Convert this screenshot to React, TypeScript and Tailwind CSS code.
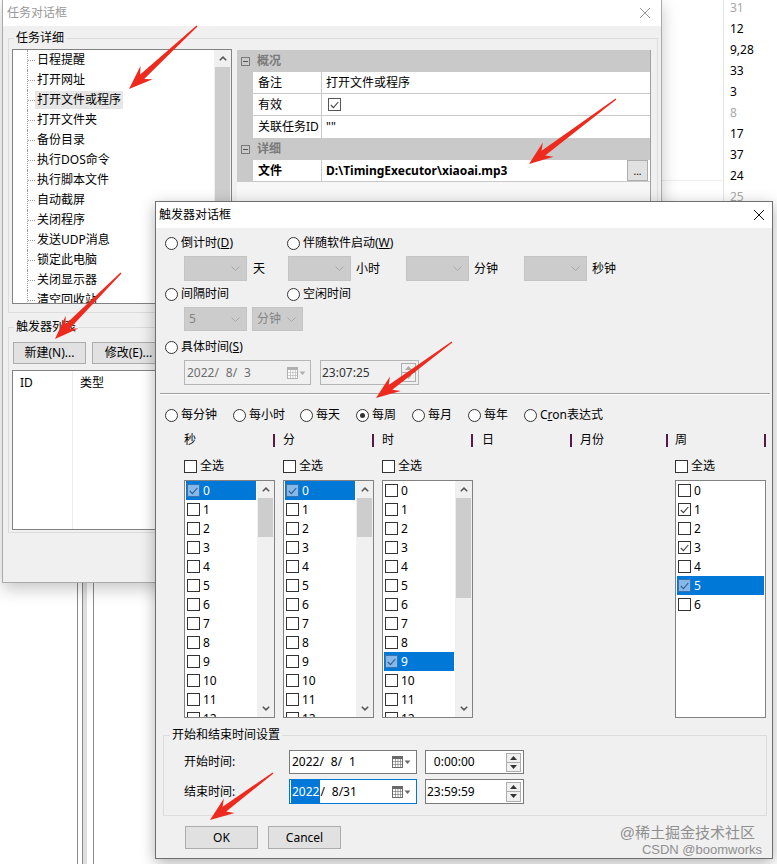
import React from "react"

const FONT = "font-['Noto_Sans','Noto_Sans_CJK_SC',sans-serif]"

// red annotation arrows: tail x,y -> tip x,y
const ARROWS: [number, number, number, number][] = [
    [197, 26, 129, 89],
    [616, 99, 529, 164],
    [121, 273, 55, 339],
    [452, 342, 376, 398],
    [273, 773, 210, 820],
]

function arrowPoints(x1: number, y1: number, x2: number, y2: number) {
    const dx = x2 - x1, dy = y2 - y1
    const len = Math.hypot(dx, dy)
    const ux = dx / len, uy = dy / len
    const nx = -uy, ny = ux
    const hl = 24, hw = 9, sw = 3, tw = 0.7
    const bx = x2 - ux * hl, by = y2 - uy * hl
    const nbx = x2 - ux * (hl - 6), nby = y2 - uy * (hl - 6)
    const pts = [
        [x1 + nx * tw, y1 + ny * tw],
        [nbx + nx * sw, nby + ny * sw],
        [bx + nx * hw, by + ny * hw],
        [x2, y2],
        [bx - nx * hw, by - ny * hw],
        [nbx - nx * sw, nby - ny * sw],
        [x1 - nx * tw, y1 - ny * tw],
    ]
    return pts.map(p => `${p[0].toFixed(1)},${p[1].toFixed(1)}`).join(" ")
}

function CloseX({ color, className = "" }: { color: string; className?: string }) {
    return (
        <svg className={className} width="10" height="10" viewBox="0 0 10 10">
            <path d="M0 0L10 10M10 0L0 10" stroke={color} strokeWidth="1" />
        </svg>
    )
}

function Radio({ label, checked = false, className = "" }: { label: React.ReactNode; checked?: boolean; className?: string }) {
    return (
        <div className={`flex items-center h-[14px] ${className}`}>
            <span className="w-[13px] h-[13px] rounded-full border border-[#333] bg-white flex items-center justify-center shrink-0">
                {checked && <span className="w-[5px] h-[5px] rounded-full bg-[#333]" />}
            </span>
            <span className="ml-[3px] whitespace-nowrap">{label}</span>
        </div>
    )
}

function Box({ checked = false, sel = false, className = "" }: { checked?: boolean; sel?: boolean; className?: string }) {
    return (
        <span className={`w-[13px] h-[13px] border flex items-center justify-center shrink-0 ${sel ? "bg-[#88b8e8] border-[#3a74b0]" : "bg-white border-[#333]"} ${className}`}>
            {checked && (
                <svg width="9" height="8" viewBox="0 0 9 8">
                    <path d="M0.8 4 L3.4 6.6 L8.3 1" fill="none" stroke={sel ? "#2a5f96" : "#444"} strokeWidth="1.1" />
                </svg>
            )}
        </span>
    )
}

function Chevron({ up = false, color = "#555" }: { up?: boolean; color?: string }) {
    return (
        <svg width="8" height="5" viewBox="0 0 8 5">
            <path d={up ? "M0.8 4.3 L4 1.1 L7.2 4.3" : "M0.8 0.7 L4 3.9 L7.2 0.7"} fill="none" stroke={color} strokeWidth="1.5" />
        </svg>
    )
}

function Combo({ value = "", className = "" }: { value?: string; className?: string }) {
    return (
        <div className={`h-full bg-[#cccccc] border border-[#c4c4c4] flex items-center pl-[4px] text-[#838383] shrink-0 ${className}`}>
            <span className="flex-1">{value}</span>
            <svg className="mr-[6px]" width="9" height="5" viewBox="0 0 9 5">
                <path d="M0.5 0.5 L4.5 4.5 L8.5 0.5" fill="none" stroke="#a8a8a8" />
            </svg>
        </div>
    )
}

function CalIcon({ color }: { color: string }) {
    return (
        <svg width="19" height="12" viewBox="0 0 19 12">
            <rect x="0.5" y="0.5" width="10" height="11" fill="#fff" stroke={color} />
            <rect x="0.5" y="0.5" width="10" height="2.5" fill={color} />
            <path d="M0.5 5.5H10.5M0.5 8.5H10.5M3.5 3V11.5M6 3V11.5M8.5 3V11.5" stroke={color} strokeWidth="0.6" />
            <path d="M12.5 4.5 H18.5 L15.5 8 Z" fill={color} />
        </svg>
    )
}

function Spin({ h, color }: { h: string; color: string }) {
    return (
        <div className={`flex flex-col w-[15px] ${h} ml-auto mr-[2px]`}>
            <div className="flex-1 border border-[#adadad] bg-[#f0f0f0] flex items-center justify-center">
                <svg width="7" height="4" viewBox="0 0 7 4"><path d="M0 4 L3.5 0 L7 4Z" fill={color} /></svg>
            </div>
            <div className="flex-1 border border-t-0 border-[#adadad] bg-[#f0f0f0] flex items-center justify-center">
                <svg width="7" height="4" viewBox="0 0 7 4"><path d="M0 0 L3.5 4 L7 0Z" fill={color} /></svg>
            </div>
        </div>
    )
}

function ListBox({ count, checked = [], sel = -1, thumb }: { count: number; checked?: number[]; sel?: number; thumb?: string }) {
    return (
        <div className="w-[91px] h-[238px] border border-[#828282] bg-white flex overflow-hidden">
            <div className="flex-1 flex flex-col overflow-hidden">
                {Array.from({ length: count }, (_, i) => (
                    <div key={i} className={`h-[19px] shrink-0 flex items-center mx-[1px] ${i === sel ? "bg-[#0078d7] text-white" : ""}`}>
                        <Box className="ml-[1px]" checked={checked.includes(i)} sel={i === sel} />
                        <span className="ml-[3px]">{i}</span>
                    </div>
                ))}
            </div>
            {thumb && (
                <div className="w-[17px] bg-[#f0f0f0] flex flex-col items-center shrink-0">
                    <div className="h-[17px] flex items-center justify-center"><Chevron up /></div>
                    <div className={`w-[15px] bg-[#cdcdcd] ${thumb}`} />
                    <div className="flex-1" />
                    <div className="h-[17px] flex items-center justify-center"><Chevron /></div>
                </div>
            )}
        </div>
    )
}

function Col({ title, w, children }: { title: string; w: string; children?: React.ReactNode }) {
    return (
        <div className={`${w} flex flex-col shrink-0`}>
            <div className="h-[14px] flex items-center justify-between">
                <span>{title}</span>
                <span className="w-[2px] h-[13px] bg-[#5a1845]" />
            </div>
            {children && (
                <>
                    <div className="mt-[12px] h-[14px] flex items-center">
                        <Box />
                        <span className="ml-[3px]">全选</span>
                    </div>
                    <div className="mt-[7px]">{children}</div>
                </>
            )}
        </div>
    )
}

const TREE = ["日程提醒", "打开网址", "打开文件或程序", "打开文件夹", "备份目录", "执行DOS命令", "执行脚本文件", "自动截屏", "关闭程序", "发送UDP消息", "锁定此电脑", "关闭显示器", "清空回收站"]

function Cat({ label }: { label: string }) {
    return (
        <div className="h-[22px] bg-[#c9c9c9] flex items-center shrink-0">
            <span className="ml-[4px] w-[9px] h-[9px] border border-[#7a7a7a] flex items-center justify-center">
                <span className="w-[5px] h-px bg-[#555]" />
            </span>
            <span className="ml-[7px] font-bold text-[#7a7a7a]">{label}</span>
        </div>
    )
}

function Prop({ name, children, bold = false, last = false }: { name: string; children: React.ReactNode; bold?: boolean; last?: boolean }) {
    return (
        <div className={`h-[22px] flex shrink-0 ${last ? "" : "border-b border-[#c9c9c9]"} ${bold ? "font-bold" : ""}`}>
            <div className="w-[16px] bg-[#c9c9c9]" />
            <div className="w-[69px] bg-white pl-[5px] flex items-center border-r border-[#c9c9c9] whitespace-nowrap">{name}</div>
            <div className="flex-1 bg-white pl-[4px] flex items-center">{children}</div>
        </div>
    )
}

function TaskWindow() {
    return (
        <div className="absolute left-[2px] top-[-1px] w-[660px] h-[584px] border border-[#aaaaaa] bg-[#f0f0f0] shadow-[0_6px_16px_rgba(0,0,0,0.22)] flex flex-col">
            <div className="h-[26px] bg-white flex items-center pl-[4px] text-[#999] shrink-0">
                <span className="flex-1">任务对话框</span>
                <CloseX color="#999" className="mr-[11px]" />
            </div>
            <div className="flex-1 flex flex-col pl-[5px] pt-[5px]">
                <fieldset className="w-[650px] h-[282px] border border-[#dcdcdc]">
                    <legend className="ml-[5px] px-[2px] leading-[14px]">任务详细</legend>
                    <div className="flex items-start">
                        <div className="mt-[4px] ml-[3px] w-[220px] h-[255px] border border-[#828282] bg-white flex">
                            <div className="flex-1 flex flex-col overflow-hidden">
                                {TREE.map((t, i) => (
                                    <div key={t} className="h-[20px] shrink-0 flex items-stretch pl-[14px]">
                                        <span className="border-l border-dotted border-[#9a9a9a]" />
                                        <span className="w-[7px] self-center border-t border-dotted border-[#9a9a9a]" />
                                        <span className={`self-center px-[2px] leading-[18px] whitespace-nowrap ${i === 2 ? "bg-[#e6e6e6]" : ""}`}>{t}</span>
                                    </div>
                                ))}
                            </div>
                            <div className="w-[17px] bg-[#f0f0f0] flex flex-col items-center shrink-0">
                                <div className="h-[17px] flex items-center justify-center"><Chevron up /></div>
                                <div className="w-[15px] h-[225px] bg-[#cdcdcd]" />
                            </div>
                        </div>
                        <div className="mt-[5px] ml-[5px] w-[414px] h-[250px] bg-[#f7f7f7] border-r border-[#a0a0a0] flex flex-col">
                            <Cat label="概况" />
                            <Prop name="备注">打开文件或程序</Prop>
                            <Prop name="有效"><Box checked className="ml-[2px] border-[#555]" /></Prop>
                            <Prop name="关联任务ID" last>""</Prop>
                            <Cat label="详细" />
                            <Prop name="文件" bold>
                                <span className="flex-1">D:\TimingExecutor\xiaoai.mp3</span>
                                <span className="w-[21px] h-[21px] mr-[2px] bg-[#e1e1e1] border border-[#adadad] flex items-center justify-center font-normal text-[10px]">...</span>
                            </Prop>
                        </div>
                    </div>
                </fieldset>
                <fieldset className="mt-[7px] w-[650px] h-[213px] border border-[#dcdcdc]">
                    <legend className="ml-[5px] px-[2px] leading-[14px]">触发器列表</legend>
                    <div className="mt-[8px] ml-[4px] flex">
                        <button className="w-[73px] h-[22px] bg-[#e1e1e1] border border-[#adadad]">新建(N)...</button>
                        <button className="ml-[6px] w-[73px] h-[22px] bg-[#e1e1e1] border border-[#adadad]">修改(E)...</button>
                    </div>
                    <div className="mt-[6px] ml-[3px] w-[630px] h-[160px] border border-[#828282] bg-white flex">
                        <div className="w-[60px] border-r border-[#ececec] pl-[7px] pt-[5px]">ID</div>
                        <div className="pl-[7px] pt-[5px]">类型</div>
                    </div>
                </fieldset>
            </div>
        </div>
    )
}

function TriggerDialog() {
    return (
        <div className="absolute left-[155px] top-[201px] w-[618px] h-[658px] border border-[#6f6f6f] bg-[#f0f0f0] shadow-[0_4px_14px_rgba(0,0,0,0.3)] flex flex-col">
            <div className="h-[26px] bg-white flex items-center pl-[3px] shrink-0">
                <span className="flex-1">触发器对话框</span>
                <CloseX color="#111" className="mr-[8px]" />
            </div>
            <div className="flex flex-col">
                <div className="mt-[8px] ml-[9px] h-[14px] flex">
                    <Radio className="w-[122px]" label={<>倒计时(<u>D</u>)</>} />
                    <Radio label={<>伴随软件启动(<u>W</u>)</>} />
                </div>
                <div className="mt-[6px] ml-[28px] h-[25px] flex">
                    <div className="w-[104px] h-full flex items-center"><Combo className="w-[63px]" /><span className="ml-[6px]">天</span></div>
                    <div className="w-[118px] h-full flex items-center"><Combo className="w-[63px]" /><span className="ml-[5px]">小时</span></div>
                    <div className="w-[118px] h-full flex items-center"><Combo className="w-[63px]" /><span className="ml-[5px]">分钟</span></div>
                    <div className="h-full flex items-center"><Combo className="w-[63px]" /><span className="ml-[5px]">秒钟</span></div>
                </div>
                <div className="mt-[6px] ml-[9px] h-[14px] flex">
                    <Radio className="w-[122px]" label="间隔时间" />
                    <Radio label="空闲时间" />
                </div>
                <div className="mt-[6px] ml-[28px] h-[24px] flex">
                    <Combo className="w-[63px]" value="5" />
                    <Combo className="ml-[5px] w-[51px]" value="分钟" />
                </div>
                <div className="mt-[9px] ml-[9px] h-[14px] flex">
                    <Radio label={<>具体时间(<u>S</u>)</>} />
                </div>
                <div className="mt-[6px] ml-[28px] h-[25px] flex">
                    <div className="w-[127px] h-full border border-[#b5b5b5] bg-[#f0f0f0] flex items-center pl-[2px] text-[#6d6d6d]">
                        <span className="flex-1 whitespace-pre">{"2022/\u20078/\u20073"}</span>
                        <span className="mr-[4px] flex"><CalIcon color="#b0b0b0" /></span>
                    </div>
                    <div className="ml-[9px] w-[99px] h-full border border-[#b5b5b5] bg-[#f0f0f0] flex items-center pl-[1px] text-[#333]">
                        <span>23:07:25</span>
                        <Spin h="h-[19px]" color="#aaa" />
                    </div>
                </div>
                <div className="mt-[8px] ml-[4px] w-[610px] h-[2px] border-t border-[#a0a0a0] border-b border-b-white" />
                <div className="mt-[13px] ml-[9px] h-[14px] flex">
                    <Radio className="w-[68px]" label="每分钟" />
                    <Radio className="w-[67px]" label="每小时" />
                    <Radio className="w-[56px]" label="每天" />
                    <Radio className="w-[56px]" label="每周" checked />
                    <Radio className="w-[56px]" label="每月" />
                    <Radio className="w-[56px]" label="每年" />
                    <Radio label={<>C<u>r</u>on表达式</>} />
                </div>
                <div className="mt-[11px] ml-[28px] flex items-start">
                    <Col title="秒" w="w-[91px]"><ListBox count={13} checked={[0]} sel={0} thumb="h-[39px]" /></Col>
                    <div className="ml-[8px]"><Col title="分" w="w-[91px]"><ListBox count={13} checked={[0]} sel={0} thumb="h-[39px]" /></Col></div>
                    <div className="ml-[8px]"><Col title="时" w="w-[91px]"><ListBox count={13} checked={[9]} sel={9} thumb="h-[100px]" /></Col></div>
                    <div className="ml-[9px]"><Col title="日" w="w-[90px]" /></div>
                    <div className="ml-[8px]"><Col title="月份" w="w-[88px]" /></div>
                    <div className="ml-[7px]"><Col title="周" w="w-[91px]"><ListBox count={7} checked={[1, 3, 5]} sel={5} /></Col></div>
                </div>
                <fieldset className="mt-[10px] ml-[7px] w-[604px] h-[88px] border border-[#dcdcdc]">
                    <legend className="ml-[6px] px-[2px] leading-[14px]">开始和结束时间设置</legend>
                    <div className="mt-[8px] pl-[20px] h-[24px] flex items-center">
                        <span className="w-[105px]">开始时间:</span>
                        <div className="w-[128px] h-full border border-[#7a7a7a] bg-white flex items-center pl-[2px]">
                            <span className="flex-1 whitespace-pre">{"2022/\u20078/\u20071"}</span>
                            <span className="mr-[5px] flex"><CalIcon color="#6a6a6a" /></span>
                        </div>
                        <div className="ml-[8px] w-[99px] h-full border border-[#7a7a7a] bg-white flex items-center pl-[1px]">
                            <span className="whitespace-pre">{"\u20070:00:00"}</span>
                            <Spin h="h-[19px]" color="#333" />
                        </div>
                    </div>
                    <div className="mt-[5px] pl-[20px] h-[25px] flex items-center">
                        <span className="w-[105px]">结束时间:</span>
                        <div className="w-[128px] h-full border border-[#0078d7] bg-white flex items-center pl-[1px]">
                            <span className="flex-1 whitespace-pre"><span className="bg-[#0078d7] text-white px-[1px] py-[3px]">2022</span>{"/\u20078/31"}</span>
                            <span className="mr-[5px] flex"><CalIcon color="#6a6a6a" /></span>
                        </div>
                        <div className="ml-[8px] w-[99px] h-full border border-[#7a7a7a] bg-white flex items-center pl-[1px]">
                            <span>23:59:59</span>
                            <Spin h="h-[20px]" color="#333" />
                        </div>
                    </div>
                </fieldset>
                <div className="mt-[10px] ml-[29px] flex">
                    <button className="w-[73px] h-[23px] bg-[#e1e1e1] border border-[#adadad]">OK</button>
                    <button className="ml-[10px] w-[73px] h-[23px] bg-[#e1e1e1] border border-[#adadad]">Cancel</button>
                </div>
            </div>
        </div>
    )
}

const NUMS: [string, boolean][] = [["31", true], ["12", false], ["9,28", false], ["33", false], ["3", false], ["8", true], ["17", false], ["37", false], ["24", false], ["25", true]]

export default function App() {
    return (
        <div className={`relative w-[777px] h-[864px] overflow-hidden bg-white text-[12px] leading-[14px] text-black ${FONT}`}>
            {/* desktop behind the windows */}
            <div className="absolute left-[723px] top-[-3px] w-[54px] h-[235px] border-l border-[#e4e4e4] pl-[6px] flex flex-col">
                {NUMS.map(([n, dim], i) => (
                    <div key={i} className={`h-[21px] shrink-0 flex items-center ${dim ? "text-[#a8a8a8]" : ""}`}>{n}</div>
                ))}
            </div>
            <div className="absolute left-[662px] top-[180px] w-[61px] h-px bg-[#eeeeee]" />
            <div className="absolute left-[77px] top-[540px] w-[17px] h-[324px] border-x border-[#8a8a8a] flex">
                <div className="ml-[4px] w-[5px] h-full border-l border-[#8a8a8a] bg-[#dedede]" />
            </div>

            <TaskWindow />
            <TriggerDialog />

            {/* watermark */}
            <div className="absolute left-[600px] top-[824px] w-[162px] flex flex-col items-end text-[#8f8f8f] font-['Liberation_Sans','Noto_Sans_CJK_SC',sans-serif] pointer-events-none">
                <span className="text-[15px] leading-[17px] mr-[7px]">@稀土掘金技术社区</span>
                <span className="text-[13px] leading-[17px]">CSDN @boomworks</span>
            </div>

            {/* annotation arrows */}
            <svg className="absolute left-0 top-0 pointer-events-none" width="777" height="864" viewBox="0 0 777 864">
                {ARROWS.map((a, i) => (
                    <polygon key={i} points={arrowPoints(a[0], a[1], a[2], a[3])} fill="#ee2a1f" />
                ))}
            </svg>
        </div>
    )
}
